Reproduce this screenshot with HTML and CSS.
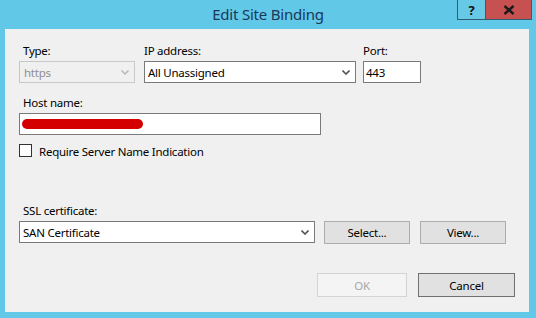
FILE: index.html
```html
<!DOCTYPE html>
<html>
<head>
<meta charset="utf-8">
<link rel="stylesheet" href="styles.css">
</head>
<body>
<div class="window">
  <div class="titlebar">
    <span class="title">Edit Site Binding</span>
    <div class="caption">
      <div class="cap-btn help">?</div>
      <div class="cap-btn close">
        <svg width="12" height="10" viewBox="0 0 12 10"><path d="M1.5 1 L10.5 9 M10.5 1 L1.5 9" stroke="#1a1a1a" stroke-width="2.4" fill="none"/></svg>
      </div>
    </div>
  </div>
  <div class="client">
    <div class="row-top">
      <div class="field f-type">
        <label class="lbl ind">Type:</label>
        <div class="combo disabled">
          <span>https</span>
          <svg class="chev" width="8" height="5" viewBox="0 0 8 5"><path d="M0.5 0.5 L4 4 L7.5 0.5" stroke="#b8b8b8" stroke-width="1.5" fill="none"/></svg>
        </div>
      </div>
      <div class="field f-ip">
        <label class="lbl">IP address:</label>
        <div class="combo">
          <span>All Unassigned</span>
          <svg class="chev" width="8" height="5" viewBox="0 0 8 5"><path d="M0.5 0.5 L4 4 L7.5 0.5" stroke="#555" stroke-width="1.6" fill="none"/></svg>
        </div>
      </div>
      <div class="field f-port">
        <label class="lbl">Port:</label>
        <div class="textbox port">443</div>
      </div>
    </div>
    <div class="field f-host">
      <label class="lbl ind">Host name:</label>
      <div class="textbox host"><span class="redact"></span></div>
    </div>
    <div class="check-row">
      <span class="checkbox"></span>
      <span class="check-text">Require Server Name Indication</span>
    </div>
    <div class="field f-ssl">
      <label class="lbl ind">SSL certificate:</label>
      <div class="ssl-row">
        <div class="combo ssl">
          <span>SAN Certificate</span>
          <svg class="chev" width="8" height="5" viewBox="0 0 8 5"><path d="M0.5 0.5 L4 4 L7.5 0.5" stroke="#555" stroke-width="1.6" fill="none"/></svg>
        </div>
        <button class="btn select">Select...</button>
        <button class="btn view">View...</button>
      </div>
    </div>
    <div class="footer">
      <button class="btn ok" disabled>OK</button>
      <button class="btn cancel">Cancel</button>
    </div>
  </div>
</div>
</body>
</html>
```
FILE: styles.css
```css
html, body {
  margin: 0;
  padding: 0;
  background: #62c8e8;
}
.window {
  width: 536px;
  height: 318px;
  background: #62c8e8;
  display: flex;
  flex-direction: column;
  font-family: "Noto Sans", "Open Sans", sans-serif;
  font-size: 11.5px;
  letter-spacing: -0.25px;
  color: #000;
  box-sizing: border-box;
}
.titlebar {
  height: 29px;
  position: relative;
  display: flex;
  align-items: center;
  justify-content: center;
}
.title {
  font-size: 15px;
  letter-spacing: -0.2px;
  color: #19385a;
  margin-top: -1px;
}
.caption {
  position: absolute;
  top: 0;
  right: 4px;
  display: flex;
}
.cap-btn {
  height: 20px;
  box-sizing: border-box;
  display: flex;
  align-items: center;
  justify-content: center;
  border: 1px solid #2f5d74;
  border-top: none;
}
.help {
  width: 28px;
  background: #68c9e6;
  font-weight: bold;
  font-size: 13px;
  color: #111;
  border-right: none;
}
.close {
  width: 47px;
  background: #c75150;
}
.client {
  margin: 0 7px 6px 5px;
  flex: 1;
  background: #f0f0f0;
  padding: 14px 0 0 14px;
  position: relative;
}
.lbl {
  display: block;
  height: 16px;
  line-height: 16px;
  margin-bottom: 2px;
}
.ind { padding-left: 4px; }
.row-top {
  display: flex;
}
.f-type { width: 116px; }
.f-ip { width: 212px; margin-left: 9px; }
.f-port { width: 58px; margin-left: 7px; }
.combo, .textbox {
  height: 22px;
  box-sizing: border-box;
  border: 1px solid #7a7a7a;
  background: #fff;
  display: flex;
  align-items: center;
  padding-left: 3px;
}
.combo { justify-content: space-between; padding-right: 5px; }
.combo.disabled {
  border-color: #c8c8c8;
  background: #f0f0f0;
  color: #8e8e8e;
  padding-left: 4px;
}
.chev { flex: none; }
.port { padding-left: 2px; }
.f-host { margin-top: 12px; width: 302px; }
.host { padding-left: 2px; }
.redact {
  display: inline-block;
  width: 121px;
  height: 10px;
  border-radius: 5px;
  background: #d40000;
}
.check-row {
  display: flex;
  align-items: center;
  margin-top: 9px;
  height: 13px;
}
.checkbox {
  width: 13px;
  height: 13px;
  box-sizing: border-box;
  border: 1px solid #333;
  background: #fff;
}
.check-text { margin-left: 7px; margin-top: 1px; }
.f-ssl { margin-top: 46px; }
.ssl-row { display: flex; align-items: flex-start; }
.ssl { width: 296px; }
.btn {
  font-family: inherit;
  font-size: 11.5px;
  letter-spacing: -0.25px;
  height: 23px;
  box-sizing: border-box;
  border: 1px solid #adadad;
  background: #e1e1e1;
  color: #000;
  padding: 0;
  margin: 0;
}
.select { width: 86px; margin-left: 9px; }
.view { width: 86px; margin-left: 10px; }
.footer {
  display: flex;
  justify-content: flex-end;
  margin-top: 29px;
  margin-right: 14px;
}
.ok {
  width: 90px;
  height: 24px;
  background: #f4f4f4;
  border-color: #d4d4d4;
  color: #a8a8a8;
}
.cancel {
  width: 97px;
  height: 24px;
  margin-left: 11px;
  border-color: #707070;
}
```
